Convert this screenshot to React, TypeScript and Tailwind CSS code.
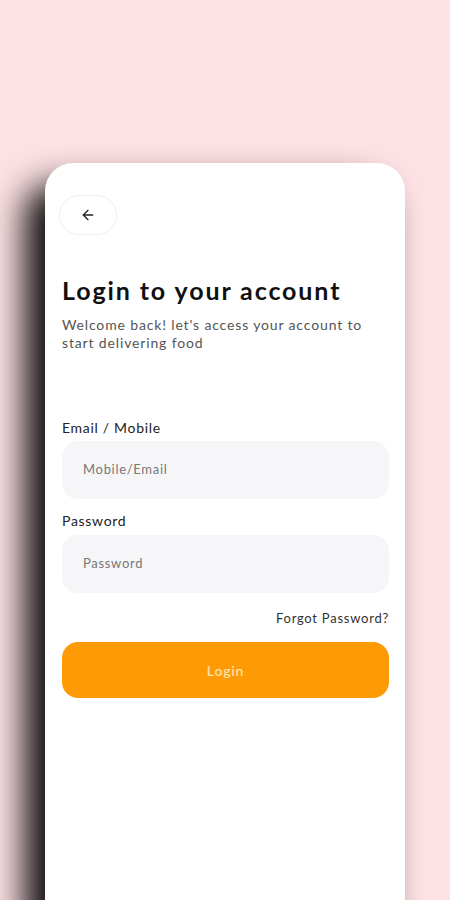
import { ArrowLeft } from 'lucide-react';

export default function App() {
  return (
    <div
      className="min-h-[900px] h-[900px] w-full overflow-hidden bg-[#fde1e4]"
      style={{ fontFamily: 'Lato, "Noto Sans", sans-serif' }}
    >
      <div className="ml-[45px] mt-[163px] h-[760px] w-[360px] rounded-t-[28px] bg-white px-[17px] pt-[32px] shadow-[-20px_22px_34px_rgba(0,0,0,0.95)]">
        {/* Back button */}
        <button className="flex h-[40px] w-[58px] items-center justify-center rounded-full border border-[#efefef] bg-white -ml-[3px]">
          <ArrowLeft className="h-[16px] w-[16px] text-[#222]" strokeWidth={2} />
        </button>

        {/* Heading */}
        <h1 className="mt-[39px] text-[25px] font-bold leading-[32px] tracking-[1.9px] text-[#111]">
          Login to your account
        </h1>
        <p className="mt-[10px] pr-[10px] text-[14px] leading-[18px] tracking-[0.85px] text-[#555]">
          Welcome back! let's access your account to start delivering food
        </p>

        {/* Form */}
        <label className="mt-[66px] block text-[14px] leading-[20px] tracking-[0.7px] text-[#222]">
          Email / Mobile
        </label>
        <div className="mt-[3px] flex h-[58px] w-[327px] items-center rounded-[16px] bg-[#f6f6f8] px-[21px] text-[13px] tracking-[0.7px] text-[#777]">
          Mobile/Email
        </div>

        <label className="mt-[12px] block text-[14px] leading-[20px] tracking-[0.7px] text-[#222]">
          Password
        </label>
        <div className="mt-[4px] flex h-[58px] w-[327px] items-center rounded-[16px] bg-[#f6f6f8] px-[21px] text-[13px] tracking-[0.7px] text-[#777]">
          Password
        </div>

        <div className="mt-[15px] w-[327px] text-right text-[13px] leading-[20px] tracking-[0.75px] text-[#333]">
          Forgot Password?
        </div>

        <button className="mt-[14px] flex h-[56px] w-[327px] items-center justify-center rounded-[16px] bg-[#fe9a05] text-[14px] font-semibold tracking-[0.8px] text-[#ffe3a6]">
          Login
        </button>
      </div>
    </div>
  );
}
